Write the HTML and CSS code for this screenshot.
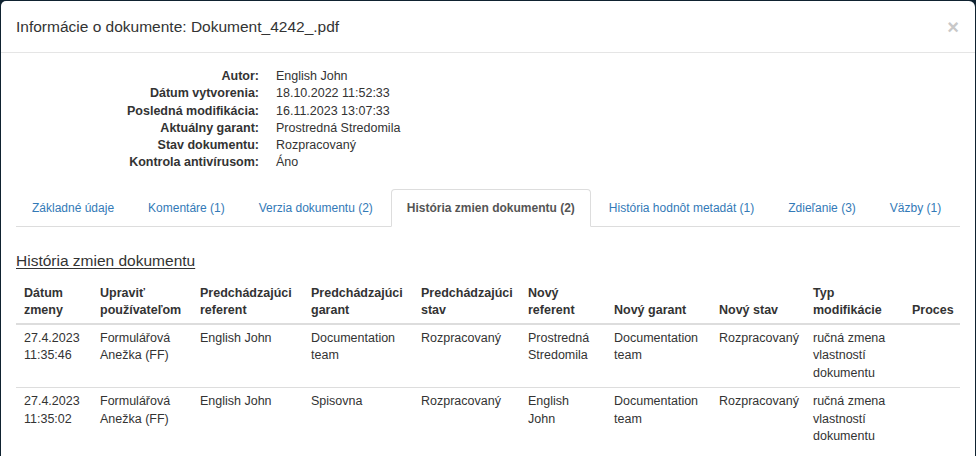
FILE: index.html
```html
<!DOCTYPE html>
<html lang="sk">
<head>
<meta charset="utf-8">
<title>Informácie o dokumente</title>
<link rel="stylesheet" href="styles.css">
</head>
<body>
<div class="modal">
  <div class="modal-header">
    <h4 class="modal-title">Informácie o dokumente: Dokument_4242_.pdf</h4>
    <button class="close" type="button">×</button>
  </div>
  <div class="modal-body">
    <dl class="info">
      <dt>Autor:</dt><dd>English John</dd>
      <dt>Dátum vytvorenia:</dt><dd>18.10.2022 11:52:33</dd>
      <dt>Posledná modifikácia:</dt><dd>16.11.2023 13:07:33</dd>
      <dt>Aktuálny garant:</dt><dd>Prostredná Stredomila</dd>
      <dt>Stav dokumentu:</dt><dd>Rozpracovaný</dd>
      <dt>Kontrola antivírusom:</dt><dd>Áno</dd>
    </dl>
    <ul class="tabs">
      <li><a href="#">Základné údaje</a></li>
      <li><a href="#">Komentáre (1)</a></li>
      <li><a href="#">Verzia dokumentu (2)</a></li>
      <li class="active"><a href="#">História zmien dokumentu (2)</a></li>
      <li><a href="#">História hodnôt metadát (1)</a></li>
      <li><a href="#">Zdieľanie (3)</a></li>
      <li><a href="#">Väzby (1)</a></li>
    </ul>
    <h4 class="section-title">História zmien dokumentu</h4>
    <table class="history">
      <colgroup>
        <col class="c1"><col class="c2"><col class="c3"><col class="c4"><col class="c5">
        <col class="c6"><col class="c7"><col class="c8"><col class="c9"><col class="c10">
      </colgroup>
      <thead>
        <tr>
          <th>Dátum zmeny</th>
          <th>Upraviť používateľom</th>
          <th>Predchádzajúci referent</th>
          <th>Predchádzajúci garant</th>
          <th>Predchádzajúci stav</th>
          <th>Nový referent</th>
          <th>Nový garant</th>
          <th>Nový stav</th>
          <th>Typ modifikácie</th>
          <th>Proces</th>
        </tr>
      </thead>
      <tbody>
        <tr>
          <td>27.4.2023 11:35:46</td>
          <td>Formulářová Anežka (FF)</td>
          <td>English John</td>
          <td>Documentation team</td>
          <td>Rozpracovaný</td>
          <td>Prostredná Stredomila</td>
          <td>Documentation team</td>
          <td>Rozpracovaný</td>
          <td>ručná zmena vlastností dokumentu</td>
          <td></td>
        </tr>
        <tr>
          <td>27.4.2023 11:35:02</td>
          <td>Formulářová Anežka (FF)</td>
          <td>English John</td>
          <td>Spisovna</td>
          <td>Rozpracovaný</td>
          <td>English John</td>
          <td>Documentation team</td>
          <td>Rozpracovaný</td>
          <td>ručná zmena vlastností dokumentu</td>
          <td></td>
        </tr>
      </tbody>
    </table>
  </div>
</div>
</body>
</html>
```
FILE: styles.css
```css
* { box-sizing: border-box; }
html, body { margin: 0; padding: 0; }
body {
  background: #0f2230;
  font-family: "Liberation Sans", Arial, sans-serif;
  font-size: 12.5px;
  line-height: 17.5px;
  color: #333;
  height: 456px;
  overflow: hidden;
}
.modal {
  margin: 1px 1px 0 1px;
  width: 974px;
  height: 470px;
  background: #fff;
  border-radius: 5px 6px 0 0;
}
.modal-header {
  display: flex;
  align-items: center;
  justify-content: space-between;
  padding: 14px 15px 14px 15px;
  border-bottom: 1px solid #e5e5e5;
}
.modal-title {
  margin: 0;
  font-size: 15.5px;
  font-weight: normal;
  line-height: 23px;
  color: #333;
}
.close {
  border: 0;
  background: none;
  padding: 0;
  margin-right: 1px;
  font-family: "Liberation Sans", Arial, sans-serif;
  font-size: 20px;
  font-weight: bold;
  line-height: 20px;
  color: #c8c8c8;
  cursor: pointer;
}
.modal-body {
  padding: 15px 15px 15px 15px;
}
.info {
  margin: 0;
  display: grid;
  grid-template-columns: 243px 1fr;
  column-gap: 17px;
}
.info dt {
  text-align: right;
  font-weight: bold;
  line-height: 17.3px;
}
.info dd {
  margin: 0;
  line-height: 17.3px;
}
.tabs {
  list-style: none;
  margin: 17px 0 0 0;
  padding: 0;
  display: flex;
  border-bottom: 1px solid #ddd;
  white-space: nowrap;
  font-size: 12px;
}
.tabs li {
  flex: 0 0 auto;
  margin: 0 2px -1px 0;
}
.tabs a {
  display: block;
  padding: 9px 15px;
  line-height: 18px;
  border: 1px solid transparent;
  border-radius: 4px 4px 0 0;
  color: #337ab7;
  text-decoration: none;
}
.tabs .active a {
  color: #555;
  font-weight: bold;
  background: #fff;
  border-color: #ddd #ddd transparent #ddd;
}
.section-title {
  margin: 23px 0 8px 0;
  font-size: 15.5px;
  font-weight: normal;
  line-height: 22px;
  text-decoration: underline;
  text-underline-offset: 2px;
  color: #333;
}
.history {
  width: 944px;
  table-layout: fixed;
  border-collapse: collapse;
}
.c1 { width: 76px; }
.c2 { width: 100px; }
.c3 { width: 111px; }
.c4 { width: 110px; }
.c5 { width: 107px; }
.c6 { width: 86px; }
.c7 { width: 105px; }
.c8 { width: 94px; }
.c9 { width: 99px; }
.c10 { width: 56px; }
.history th {
  text-align: left;
  vertical-align: bottom;
  font-weight: bold;
  padding: 5px 8px 3px 8px;
  border-bottom: 2px solid #ddd;
}
.history td {
  vertical-align: top;
  padding: 5px 8px 5px 8px;
  border-top: 1px solid #ddd;
}
.history thead + tbody tr:first-child td { border-top: 0; }
```
